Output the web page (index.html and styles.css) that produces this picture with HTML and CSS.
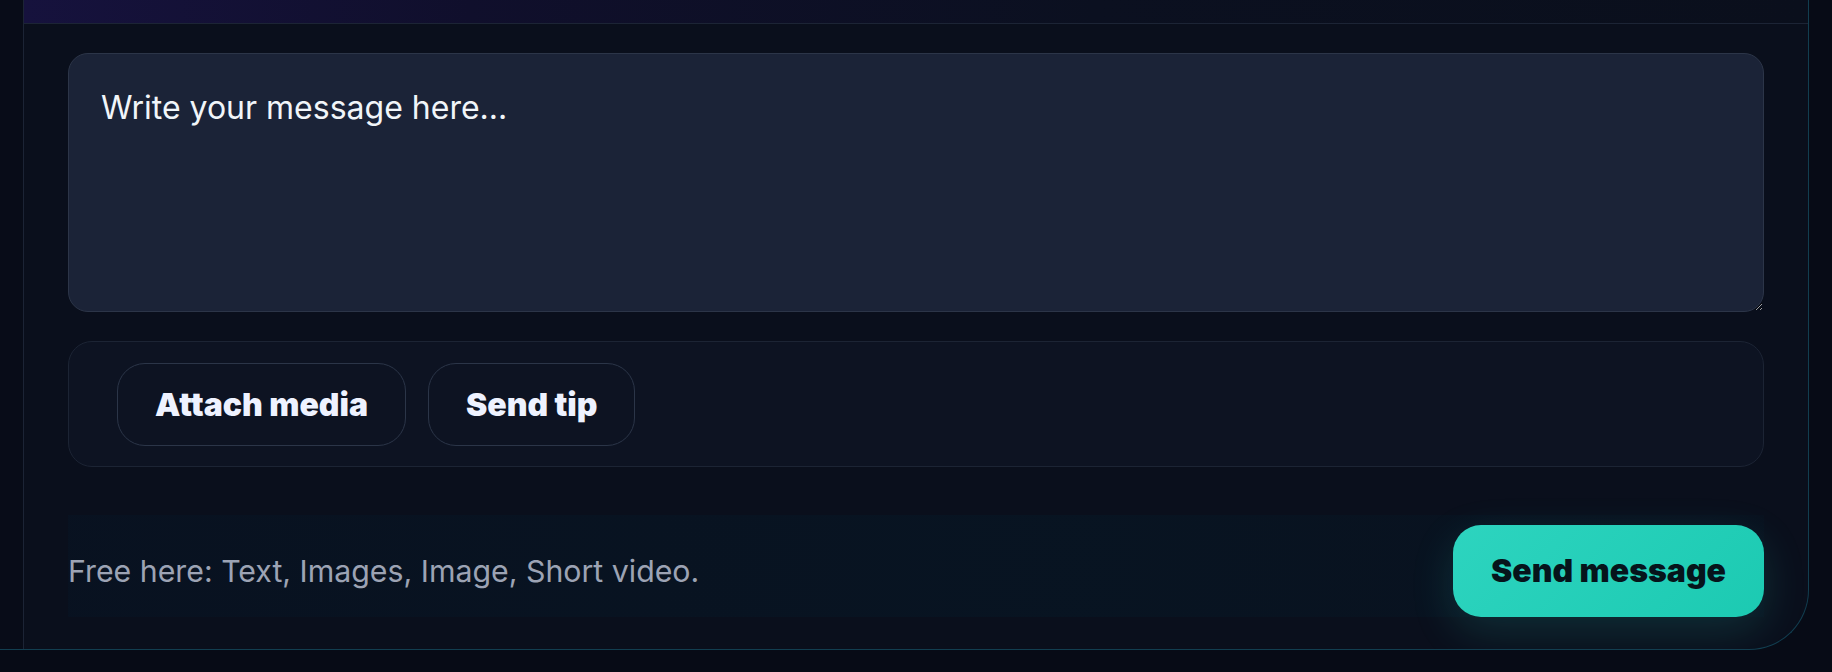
FILE: index.html
```html
<!DOCTYPE html>
<html lang="en">
<head>
<meta charset="utf-8">
<title>Composer</title>
<link rel="stylesheet" href="styles.css">
</head>
<body>
<div class="shell">
  <aside class="sidebar"></aside>
  <main class="chat">
    <div class="chat-header"></div>
    <div class="composer">
      <textarea class="message-input" placeholder="Write your message here..."></textarea>
      <div class="toolbar">
        <button class="tool-btn" type="button">Attach media</button>
        <button class="tool-btn" type="button">Send tip</button>
      </div>
      <div class="composer-footer">
        <p class="hint">Free here: Text, Images, Image, Short video.</p>
        <button class="send-btn" type="button">Send message</button>
      </div>
    </div>
  </main>
</div>
</body>
</html>
```
FILE: styles.css
```css
* { box-sizing: border-box; }

html, body {
  margin: 0;
  padding: 0;
  background: #070b16;
  font-family: Inter, "Noto Sans", "Liberation Sans", sans-serif;
}

.shell {
  display: flex;
  width: 1809px;
  height: 650px;
  background: #0a0f1c;
  border-right: 1px solid #123e50;
  border-bottom: 1px solid #123e50;
  border-bottom-right-radius: 60px;
  overflow: hidden;
}

.sidebar {
  flex: 0 0 24px;
  background: #080c18;
  border-right: 1px solid #1c2435;
}

.chat {
  flex: 1;
  display: flex;
  flex-direction: column;
  min-width: 0;
}

.chat-header {
  height: 24px;
  flex: 0 0 24px;
  background: linear-gradient(90deg, #16123d 0%, #100f2c 25%, #0b1020 60%, #0a0f1c 100%);
  border-bottom: 1px solid #1c2435;
}

.composer {
  display: flex;
  flex-direction: column;
  padding: 29px 44px 32px 44px;
}

.message-input {
  display: block;
  width: 100%;
  height: 259px;
  margin: 0;
  padding: 30px 32px 26px;
  background: #1b2337;
  border: 1px solid #2c3548;
  border-radius: 20px;
  color: #f1f5f9;
  font-family: inherit;
  font-size: 32px;
  line-height: 1.5;
  outline: none;
  resize: vertical;
}

.message-input::placeholder {
  color: #f1f5f9;
  opacity: 1;
}

.toolbar {
  display: flex;
  gap: 22px;
  margin-top: 29px;
  padding: 21px 48px 20px;
  background: #0d1322;
  border: 1px solid #1c2434;
  border-radius: 24px;
}

.tool-btn {
  padding: 21px 37px;
  background: transparent;
  border: 1px solid #2b3548;
  border-radius: 28px;
  color: #eef2ff;
  font-family: inherit;
  font-size: 32px;
  font-weight: 900;
  line-height: 39px;
}

.composer-footer {
  display: flex;
  align-items: center;
  justify-content: space-between;
  margin-top: 48px;
  padding-top: 10px;
  background: linear-gradient(90deg, rgba(7, 20, 36, 0.55) 0%, rgba(7, 22, 36, 0.7) 60%, rgba(7, 22, 36, 0.3) 100%);
}

.hint {
  margin: 0;
  color: #9ca3b4;
  font-size: 30.3px;
  line-height: 40px;
}

.send-btn {
  padding: 26px 38px;
  background: linear-gradient(135deg, #2dd4bf 0%, #1ccab2 100%);
  border: none;
  border-radius: 28px;
  color: #06141b;
  font-family: inherit;
  font-size: 32px;
  font-weight: 900;
  line-height: 40px;
  box-shadow: 0 14px 44px rgba(45, 212, 191, 0.16);
}
```
